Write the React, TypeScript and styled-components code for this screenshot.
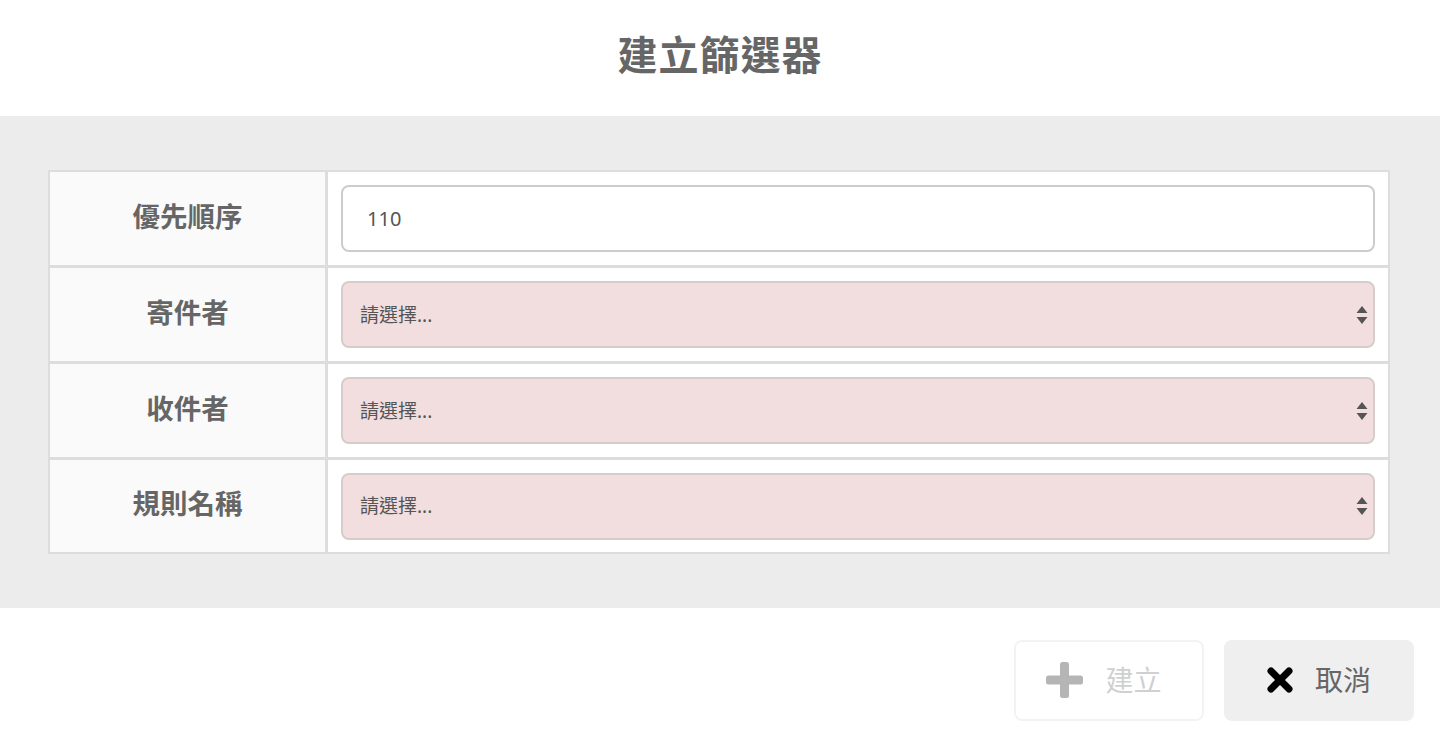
import React from 'react'
import styled, { createGlobalStyle } from 'styled-components'

const GlobalStyle = createGlobalStyle`
  html, body {
    margin: 0;
    padding: 0;
    background: #fff;
    font-family: 'Noto Sans', 'Noto Sans CJK TC', sans-serif;
  }
`

const fields = [
  { label: '優先順序', kind: 'input', value: '110' },
  { label: '寄件者', kind: 'select' },
  { label: '收件者', kind: 'select' },
  { label: '規則名稱', kind: 'select' },
]

export default function App() {
  return (
    <Page>
      <GlobalStyle />
      <Header>
        <Title>建立篩選器</Title>
      </Header>
      <Body>
        <FormTable>
          {fields.map(f => (
            <React.Fragment key={f.label}>
              <LabelCell>{f.label}</LabelCell>
              <ValueCell>
                {f.kind === 'input' ? (
                  <TextInput type='text' defaultValue={f.value} />
                ) : (
                  <SelectWrap>
                    <Select defaultValue=''>
                      <option value=''>請選擇...</option>
                    </Select>
                    <Arrows width='12' height='20' viewBox='0 0 12 20'>
                      <path d='M6 1 L11.5 8 H0.5 Z' fill='#555' />
                      <path d='M6 19 L11.5 12 H0.5 Z' fill='#555' />
                    </Arrows>
                  </SelectWrap>
                )}
              </ValueCell>
            </React.Fragment>
          ))}
        </FormTable>
      </Body>
      <Footer>
        <Button variant='create' disabled>
          <svg width='37' height='36' viewBox='0 0 37 36'>
            <rect x='14' y='0' width='9' height='36' rx='2.5' fill='#b5b5b5' />
            <rect x='0' y='13.5' width='37' height='9' rx='2.5' fill='#b5b5b5' />
          </svg>
          <span>建立</span>
        </Button>
        <Button variant='cancel'>
          <svg width='26' height='26' viewBox='0 0 26 26'>
            <path d='M4 4 L22 22 M22 4 L4 22' stroke='#000' strokeWidth='7' strokeLinecap='round' />
          </svg>
          <span>取消</span>
        </Button>
      </Footer>
    </Page>
  )
}

const Page = styled.div`
  width: 1440px;
  min-height: 754px;
  background: #fff;
`

const Header = styled.div`
  height: 116px;
  display: flex;
  align-items: center;
  justify-content: center;
`

const Title = styled.h1`
  margin: 0;
  font-size: 40px;
  font-weight: 700;
  color: #666;
  letter-spacing: 1px;
  line-height: 1;
  padding-bottom: 6px;
`

const Body = styled.div`
  background: #ececec;
  padding: 54px 50px 54px 48px;
`

const FormTable = styled.div`
  display: grid;
  grid-template-columns: 275px 1fr;
  grid-template-rows: repeat(3, 93px) 92px;
  gap: 3px;
  border: 2px solid #dddddd;
  background: #dddddd;
`

const LabelCell = styled.div`
  background: #fafafa;
  display: flex;
  align-items: center;
  justify-content: center;
  font-size: 27.5px;
  font-weight: 700;
  color: #666;
  padding-bottom: 8px;
  box-sizing: border-box;
`

const ValueCell = styled.div`
  background: #fff;
  padding: 12px 13px;
  display: flex;
  align-items: center;
`

const TextInput = styled.input`
  box-sizing: border-box;
  width: 100%;
  height: 67px;
  border: 2px solid #cccccc;
  border-radius: 8px;
  padding: 0 24px;
  font-family: 'Noto Sans', 'Noto Sans CJK TC', sans-serif;
  font-size: 20px;
  color: #555;
  background: #fff;
  outline: none;
`

const SelectWrap = styled.div`
  position: relative;
  width: 100%;
`

const Select = styled.select`
  appearance: none;
  -webkit-appearance: none;
  box-sizing: border-box;
  width: 100%;
  height: 67px;
  border: 2px solid #d6cccc;
  border-radius: 8px;
  padding: 0 40px 0 17px;
  font-family: 'Noto Sans', 'Noto Sans CJK TC', sans-serif;
  font-size: 19px;
  color: #555;
  background: #f2dede;
  outline: none;
`

const Arrows = styled.svg`
  position: absolute;
  right: 7px;
  top: 50%;
  transform: translateY(-50%);
  pointer-events: none;
`

const Footer = styled.div`
  display: flex;
  justify-content: flex-end;
  gap: 20px;
  padding: 32px 26px 0 0;
`

const Button = styled.button<{ variant: 'create' | 'cancel' }>`
  box-sizing: border-box;
  width: 190px;
  height: 81px;
  display: flex;
  align-items: center;
  justify-content: center;
  gap: 22px;
  border-radius: 8px;
  font-family: 'Noto Sans', 'Noto Sans CJK TC', sans-serif;
  font-size: 28px;
  cursor: pointer;
  border: ${p => (p.variant === 'create' ? '2px solid #f3f3f3' : 'none')};
  background: ${p => (p.variant === 'create' ? '#fff' : '#efefef')};
  color: ${p => (p.variant === 'create' ? '#d0d0d0' : '#666')};
  padding: ${p => (p.variant === 'create' ? '0 10px 2px 0' : '0 0 2px 0')};

  span {
    line-height: 1;
  }
`
